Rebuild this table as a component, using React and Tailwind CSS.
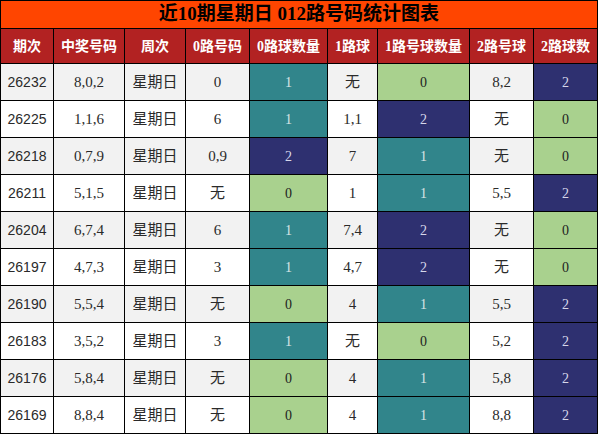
import React from "react";

const rows = [
  ["26232", "8,0,2", "0", 1, "无", 0, "8,2", 2],
  ["26225", "1,1,6", "6", 1, "1,1", 2, "无", 0],
  ["26218", "0,7,9", "0,9", 2, "7", 1, "无", 0],
  ["26211", "5,1,5", "无", 0, "1", 1, "5,5", 2],
  ["26204", "6,7,4", "6", 1, "7,4", 2, "无", 0],
  ["26197", "4,7,3", "3", 1, "4,7", 2, "无", 0],
  ["26190", "5,5,4", "无", 0, "4", 1, "5,5", 2],
  ["26183", "3,5,2", "3", 1, "无", 0, "5,2", 2],
  ["26176", "5,8,4", "无", 0, "4", 1, "5,8", 2],
  ["26169", "8,8,4", "无", 0, "4", 1, "8,8", 2],
];

const heads = ["期次", "中奖号码", "周次", "0路号码", "0路球数量", "1路球", "1路号球数量", "2路号球", "2路球数"];

// 0 绿 / 1 青 / 2 深蓝
const tone = {
  0: "bg-[#a9d18e] text-[#222]",
  1: "bg-[#31858b] text-[#d9e4e6]",
  2: "bg-[#2e3070] text-[#d6d7ea]",
};

const serif = "font-['Liberation_Serif','Noto_Sans_CJK_SC',serif]";
const sans = "font-['Liberation_Sans','Noto_Sans_CJK_SC',sans-serif]";

export default function App() {
  return (
    <div className="w-[598px] h-[434px] bg-black p-px grid gap-px grid-cols-[52px_70px_60px_63px_77px_49px_91px_63px_63px] grid-rows-[27px_34px_repeat(10,36px)]">
      <div className={`col-span-9 bg-[#ff4500] flex items-center justify-center text-[19px] font-bold text-black ${serif}`}>
        近10期星期日 012路号码统计图表
      </div>
      {heads.map((h) => (
        <div key={h} className={`bg-[#b22222] text-white font-bold text-[14px] flex items-center justify-center ${serif}`}>
          {h}
        </div>
      ))}
      {rows.map((r, i) => {
        const bg = i % 2 === 0 ? "bg-[#f2f2f2]" : "bg-white";
        const plain = `${bg} flex items-center justify-center text-[#2a2a2a]`;
        const colored = (v) => `${tone[v]} flex items-center justify-center text-[14px] ${serif}`;
        const cell = (v) => (
          <div className={`${plain} ${v === "无" ? `${sans} text-[15px]` : `${serif} text-[15px]`}`}>{v}</div>
        );
        return (
          <React.Fragment key={r[0]}>
            <div className={`${plain} ${sans} text-[14px]`}>{r[0]}</div>
            {cell(r[1])}
            <div className={`${plain} ${sans} text-[15px]`}>星期日</div>
            {cell(r[2])}
            <div className={colored(r[3])}>{r[3]}</div>
            {cell(r[4])}
            <div className={colored(r[5])}>{r[5]}</div>
            {cell(r[6])}
            <div className={colored(r[7])}>{r[7]}</div>
          </React.Fragment>
        );
      })}
    </div>
  );
}
